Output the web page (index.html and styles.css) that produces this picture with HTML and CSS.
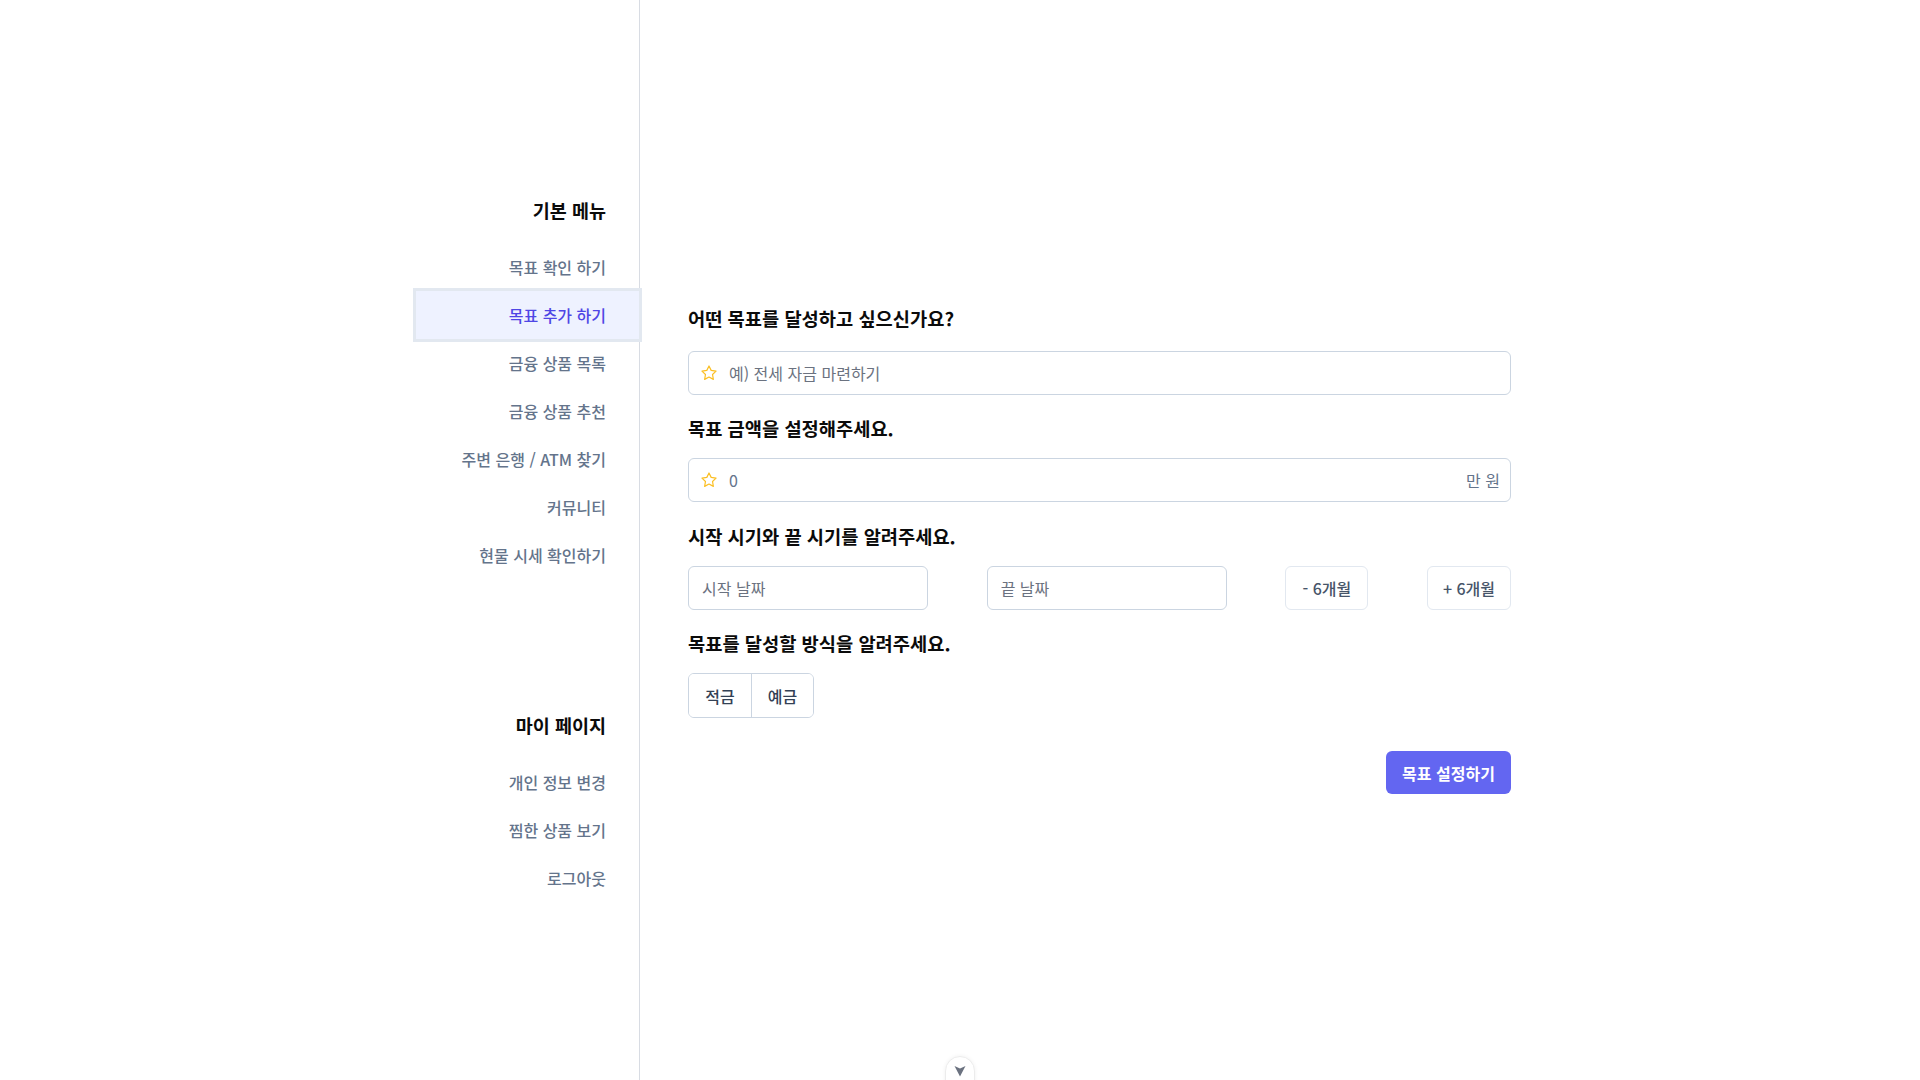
FILE: index.html
```html
<!DOCTYPE html>
<html lang="ko">
<head>
<meta charset="utf-8">
<title>목표 추가 하기</title>
<link rel="stylesheet" href="styles.css">
</head>
<body>
<div class="layout">
  <aside class="sidebar">
    <nav class="group">
      <h3 class="group-title">기본 메뉴</h3>
      <a class="nav-item">목표 확인 하기</a>
      <a class="nav-item active">목표 추가 하기</a>
      <a class="nav-item">금융 상품 목록</a>
      <a class="nav-item">금융 상품 추천</a>
      <a class="nav-item">주변 은행 / ATM 찾기</a>
      <a class="nav-item">커뮤니티</a>
      <a class="nav-item">현물 시세 확인하기</a>
    </nav>
    <nav class="group group-my">
      <h3 class="group-title">마이 페이지</h3>
      <a class="nav-item">개인 정보 변경</a>
      <a class="nav-item">찜한 상품 보기</a>
      <a class="nav-item">로그아웃</a>
    </nav>
  </aside>
  <main class="main">
    <h2 class="q q1">어떤 목표를 달성하고 싶으신가요?</h2>
    <label class="field f1">
      <svg class="star" viewBox="0 0 24 24" width="18" height="18"><path d="M12 2.6l2.9 5.9 6.5.95-4.7 4.58 1.11 6.47L12 17.45l-5.81 3.05 1.11-6.47-4.7-4.58 6.5-.95z" fill="none" stroke="#fbbf24" stroke-width="1.6" stroke-linejoin="round"/></svg>
      <input class="field-input" type="text" placeholder="예) 전세 자금 마련하기">
    </label>

    <h2 class="q q2">목표 금액을 설정해주세요.</h2>
    <label class="field f2">
      <svg class="star" viewBox="0 0 24 24" width="18" height="18"><path d="M12 2.6l2.9 5.9 6.5.95-4.7 4.58 1.11 6.47L12 17.45l-5.81 3.05 1.11-6.47-4.7-4.58 6.5-.95z" fill="none" stroke="#fbbf24" stroke-width="1.6" stroke-linejoin="round"/></svg>
      <input class="field-input value" type="text" value="0">
      <span class="unit">만 원</span>
    </label>

    <h2 class="q q3">시작 시기와 끝 시기를 알려주세요.</h2>
    <div class="date-row">
      <input class="date" type="text" placeholder="시작 날짜">
      <input class="date" type="text" placeholder="끝 날짜">
      <button class="month minus">- 6개월</button>
      <button class="month plus">+ 6개월</button>
    </div>

    <h2 class="q q4">목표를 달성할 방식을 알려주세요.</h2>
    <div class="segment">
      <button class="seg">적금</button>
      <button class="seg">예금</button>
    </div>

    <div class="actions">
      <button class="submit">목표 설정하기</button>
    </div>
  </main>
</div>
<button class="scroll-toggle" aria-label="아래로">
  <svg viewBox="0 0 12 12" width="12" height="12"><path d="M0.5 1 L6 3.6 L11.5 1 L6 11.5 Z" fill="#6b7280"/></svg>
</button>
</body>
</html>
```

FILE: styles.css
```css
* { box-sizing: border-box; }

html, body {
  margin: 0;
  padding: 0;
  background: #ffffff;
}

body {
  font-family: "Noto Sans CJK KR", "Noto Sans", sans-serif;
  color: #111111;
  overflow: hidden;
}

.layout {
  display: flex;
  justify-content: center;
  min-height: 100vh;
}

/* Sidebar */
.sidebar {
  width: 231px;
  border-right: 1px solid #d8dce3;
  padding-top: 198px;
  display: flex;
  flex-direction: column;
}

.group {
  display: flex;
  flex-direction: column;
}

.group-my {
  margin-top: 134px;
}

.group-title {
  margin: 0 0 21px 0;
  padding-right: 33px;
  text-align: right;
  font-size: 18.5px;
  line-height: 24px;
  font-weight: 700;
  color: #0b0b0b;
}

.nav-item {
  display: block;
  margin-left: 7px;
  height: 48px;
  line-height: 48px;
  padding-right: 33px;
  text-align: right;
  font-size: 16px;
  font-weight: 500;
  color: #64748b;
  text-decoration: none;
  cursor: pointer;
}

.nav-item.active {
  background: #eef2ff;
  outline: 3px solid #e2e8f0;
  color: #4f46e5;
  position: relative;
}

/* Main */
.main {
  width: 871px;
  padding-left: 48px;
  padding-top: 305px;
  display: flex;
  flex-direction: column;
}

.q {
  margin: 0;
  font-size: 18.7px;
  line-height: 26px;
  font-weight: 700;
  color: #0b0b0b;
}

.q2 { margin-top: 20px; }
.q3 { margin-top: 21px; }
.q4 { margin-top: 20px; }

.field {
  display: flex;
  align-items: center;
  gap: 11px;
  height: 44px;
  padding: 0 10px 0 11px;
  border: 1px solid #cbd5e1;
  border-radius: 6px;
  background: #fff;
}

.f1 { margin-top: 20px; }
.f2 { margin-top: 17px; }

.star { flex: none; }

.field-input {
  flex: 1;
  border: none;
  outline: none;
  padding: 0;
  font: inherit;
  font-size: 16px;
  color: #64748b;
  background: transparent;
}

.field-input::placeholder { color: #6b7280; }

.unit {
  font-size: 16px;
  color: #64748b;
}

.date-row {
  margin-top: 17px;
  display: flex;
  justify-content: space-between;
}

.date {
  width: 240px;
  height: 44px;
  border: 1px solid #cbd5e1;
  border-radius: 6px;
  padding: 0 13px;
  font: inherit;
  font-size: 16px;
  color: #6b7280;
  outline: none;
}

.date::placeholder { color: #6b7280; }

.month {
  height: 44px;
  border: 1px solid #e2e8f0;
  border-radius: 6px;
  background: #fff;
  font: inherit;
  font-size: 16px;
  font-weight: 500;
  color: #475569;
  padding: 0;
}

.minus { width: 83px; }
.plus { width: 84px; }

.segment {
  margin-top: 17px;
  display: flex;
  align-self: flex-start;
  height: 45px;
  border: 1px solid #cbd5e1;
  border-radius: 6px;
  overflow: hidden;
}

.seg {
  width: 62px;
  border: none;
  background: #fff;
  font: inherit;
  font-size: 16px;
  font-weight: 500;
  color: #334155;
  padding: 0;
}

.seg + .seg { border-left: 1px solid #cbd5e1; }

.actions {
  margin-top: 33px;
  display: flex;
  justify-content: flex-end;
}

.submit {
  width: 125px;
  height: 43px;
  border: none;
  border-radius: 6px;
  background: #6366f1;
  color: #ffffff;
  font: inherit;
  font-size: 16px;
  font-weight: 600;
  padding: 0;
}

/* floating toggle at bottom */
.scroll-toggle {
  position: fixed;
  left: 945px;
  top: 1056px;
  width: 30px;
  height: 40px;
  border: 1px solid #ececec;
  border-radius: 15px;
  background: #fff;
  box-shadow: 0 0 4px rgba(0,0,0,0.06);
  padding: 8px 0 0 0;
  display: flex;
  justify-content: center;
  align-items: flex-start;
}
```
